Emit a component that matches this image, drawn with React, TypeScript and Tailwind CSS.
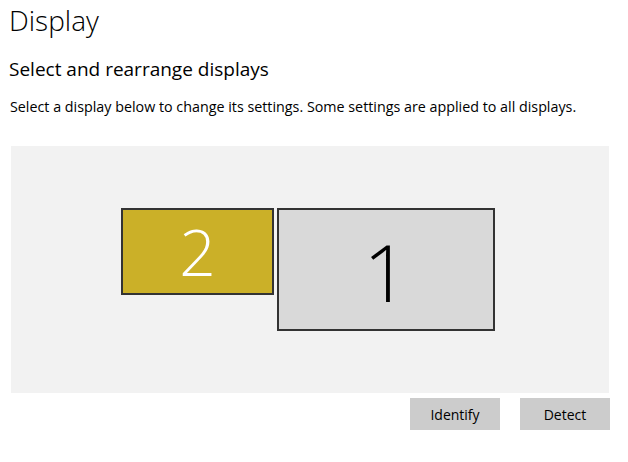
export default function App() {
  const font = { fontFamily: '"Open Sans", "Noto Sans", sans-serif' };
  return (
    <div className="h-[462px] w-[628px] bg-white text-black" style={font}>
      <div className="px-[9px] pt-[2px]">
        <h1 className="text-[28px] font-light leading-[36px]">Display</h1>
        <h2 className="mt-[18px] text-[19px] font-normal leading-[26px]">Select and rearrange displays</h2>
        <p className="mt-[15px] pl-px text-[14.3px] leading-[20px]">
          Select a display below to change its settings. Some settings are applied to all displays.
        </p>
      </div>

      <div className="ml-[11px] mt-[29px] flex h-[247px] w-[598px] items-center justify-center bg-[#f2f2f2] pr-[4px]">
        <div className="flex items-start gap-[3px]">
          <div className="flex h-[87px] w-[153px] items-center justify-center border-2 border-[#333333] bg-[#cbb028]">
            <span className="text-[64px] font-light leading-none text-white">2</span>
          </div>
          <div className="flex h-[123px] w-[218px] items-center justify-center border-2 border-[#333333] bg-[#d9d9d9]">
            <span className="mt-[2px] text-[80px] font-light leading-none">1</span>
          </div>
        </div>
      </div>

      <div className="ml-[410px] mt-[5px] flex gap-[20px]">
        <button className="h-[32px] w-[90px] bg-[#cccccc] text-[14px]">Identify</button>
        <button className="h-[32px] w-[90px] bg-[#cccccc] text-[14px]">Detect</button>
      </div>
    </div>
  );
}
